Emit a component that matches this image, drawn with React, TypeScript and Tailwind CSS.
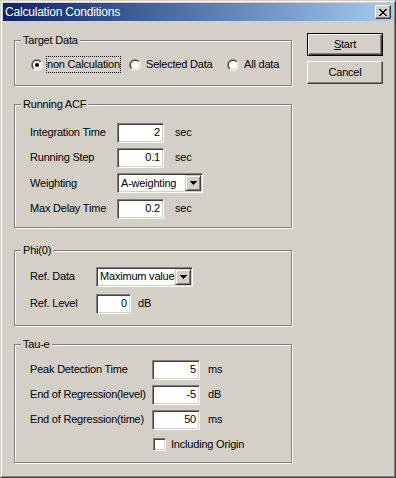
import React from "react";

const sunken =
  "border border-t-[#808080] border-l-[#808080] border-b-white border-r-white shadow-[inset_1px_1px_0_#404040,inset_-1px_-1px_0_#d4d0c8]";

function Group({ label, className, children }: { label: string; className: string; children: React.ReactNode }) {
  return (
    <div className={`flex flex-col w-[278px] border border-[#808080] shadow-[inset_1px_1px_0_#fff,1px_1px_0_#fff] ${className}`}>
      <span className="self-start -mt-[7px] ml-[6px] px-[2px] h-[13px] leading-[13px] bg-[#d4d0c8]">{label}</span>
      {children}
    </div>
  );
}

function Edit({ className, value }: { className: string; value: string }) {
  return (
    <div className={`h-[20px] bg-white ${sunken} flex items-center justify-end pr-[3px] ${className}`}>{value}</div>
  );
}

function Arrow() {
  return (
    <svg width="7" height="4" viewBox="0 0 7 4" shapeRendering="crispEdges">
      <path d="M0 0h7v1h-1v1h-1v1h-1v1h-1v-1h-1v-1h-1v-1h-1z" fill="#000" />
    </svg>
  );
}

function Combo({ className, value }: { className: string; value: string }) {
  return (
    <div className={`h-[20px] bg-white ${sunken} flex items-stretch p-px ${className}`}>
      <span className="flex-1 flex items-center pl-[2px] overflow-hidden">{value}</span>
      <div className="w-[16px] shrink-0 bg-[#d4d0c8] border border-t-[#d4d0c8] border-l-[#d4d0c8] border-r-[#404040] border-b-[#404040] shadow-[inset_1px_1px_0_#fff,inset_-1px_-1px_0_#808080] flex items-center justify-center">
        <Arrow />
      </div>
    </div>
  );
}

function Radio({ checked }: { checked?: boolean }) {
  return (
    <svg width="12" height="12" viewBox="0 0 12 12" className="shrink-0">
      <defs>
        <linearGradient id="ro" x1="0" y1="0" x2="1" y2="1">
          <stop offset="0.5" stopColor="#808080" />
          <stop offset="0.5" stopColor="#ffffff" />
        </linearGradient>
        <linearGradient id="ri" x1="0" y1="0" x2="1" y2="1">
          <stop offset="0.5" stopColor="#404040" />
          <stop offset="0.5" stopColor="#d4d0c8" />
        </linearGradient>
      </defs>
      <circle cx="6" cy="6" r="6" fill="url(#ro)" />
      <circle cx="6" cy="6" r="5" fill="url(#ri)" />
      <circle cx="6" cy="6" r="4" fill="#fff" />
      {checked && <circle cx="6" cy="6" r="2" fill="#000" />}
    </svg>
  );
}

function CloseGlyph() {
  const rows = [
    [0, 1, 6, 7],
    [1, 2, 5, 6],
    [2, 3, 4, 5],
    [3, 4],
    [2, 3, 4, 5],
    [1, 2, 5, 6],
    [0, 1, 6, 7],
  ];
  return (
    <svg width="8" height="7" viewBox="0 0 8 7" shapeRendering="crispEdges">
      {rows.map((r, y) => r.map((x) => <rect key={`${x}-${y}`} x={x} y={y} width="1" height="1" fill="#000" />))}
    </svg>
  );
}

export default function App() {
  return (
    <div className="w-[396px] h-[478px] bg-[#d4d0c8] border border-t-[#d4d0c8] border-l-[#d4d0c8] border-r-[#404040] border-b-[#404040] font-['Liberation_Sans',Arial,sans-serif] text-[11px] tracking-[-0.2px] text-black whitespace-nowrap">
      <div className="h-full border border-t-white border-l-white border-r-[#808080] border-b-[#808080] p-px flex flex-col">
        {/* Title bar */}
        <div className="h-[18px] shrink-0 flex items-center justify-between bg-[linear-gradient(to_right,#0a246a,#a6caf0)]">
          <span className="text-white text-[12px] pl-[2px] leading-[18px]">Calculation Conditions</span>
          <div className="w-[16px] h-[14px] mr-[2px] bg-[#d4d0c8] border border-t-white border-l-white border-r-[#404040] border-b-[#404040] shadow-[inset_-1px_-1px_0_#808080] flex items-center justify-center">
            <CloseGlyph />
          </div>
        </div>

        {/* Client */}
        <div className="flex flex-1">
          <div className="w-[289px] pl-[11px] pt-[19px] flex flex-col">
            <Group label="Target Data" className="h-[46px]">
              <div className="mt-[9px] h-[17px] pl-[16px] flex items-center">
                <div className="w-[98px] flex items-center">
                  <Radio checked />
                  <span className="ml-[3px] border border-dotted border-black leading-[15px]">non Calculation</span>
                </div>
                <div className="w-[98px] flex items-center">
                  <Radio />
                  <span className="ml-[4px] border border-transparent leading-[15px]">Selected Data</span>
                </div>
                <div className="flex items-center">
                  <Radio />
                  <span className="ml-[4px] border border-transparent leading-[15px]">All data</span>
                </div>
              </div>
            </Group>

            <Group label="Running ACF" className="mt-[18px] h-[124px]">
              <div className="mt-[9px] pl-[15px] flex flex-col">
                <div className="h-[25px] flex items-center">
                  <span className="w-[87px]">Integration Time</span>
                  <Edit className="w-[47px]" value="2" />
                  <span className="ml-[11px]">sec</span>
                </div>
                <div className="h-[25px] flex items-center">
                  <span className="w-[87px]">Running Step</span>
                  <Edit className="w-[47px]" value="0.1" />
                  <span className="ml-[11px]">sec</span>
                </div>
                <div className="h-[26px] flex items-center">
                  <span className="w-[87px]">Weighting</span>
                  <Combo className="w-[86px]" value="A-weighting" />
                </div>
                <div className="h-[25px] flex items-center">
                  <span className="w-[87px]">Max Delay Time</span>
                  <Edit className="w-[47px]" value="0.2" />
                  <span className="ml-[11px]">sec</span>
                </div>
              </div>
            </Group>

            <Group label="Phi(0)" className="mt-[22px] h-[76px]">
              <div className="mt-[7px] pl-[15px] flex flex-col gap-[2px]">
                <div className="h-[25px] flex items-center">
                  <span className="w-[66px]">Ref. Data</span>
                  <Combo className="w-[97px]" value="Maximum value" />
                </div>
                <div className="h-[25px] flex items-center">
                  <span className="w-[66px]">Ref. Level</span>
                  <Edit className="w-[35px]" value="0" />
                  <span className="ml-[7px]">dB</span>
                </div>
              </div>
            </Group>

            <Group label="Tau-e" className="mt-[18px] h-[119px]">
              <div className="mt-[6px] pl-[15px] flex flex-col">
                <div className="h-[25px] flex items-center">
                  <span className="w-[122px]">Peak Detection Time</span>
                  <Edit className="w-[48px]" value="5" />
                  <span className="ml-[8px]">ms</span>
                </div>
                <div className="h-[25px] flex items-center">
                  <span className="w-[122px]">End of Regression(level)</span>
                  <Edit className="w-[48px]" value="-5" />
                  <span className="ml-[8px]">dB</span>
                </div>
                <div className="h-[25px] flex items-center">
                  <span className="w-[122px]">End of Regression(time)</span>
                  <Edit className="w-[48px]" value="50" />
                  <span className="ml-[8px]">ms</span>
                </div>
                <div className="h-[25px] flex items-center">
                  <span className="w-[123px]" />
                  <div className={`w-[13px] h-[13px] bg-white ${sunken}`} />
                  <span className="ml-[5px]">Including Origin</span>
                </div>
              </div>
            </Group>
          </div>

          <div className="pl-[15px] pt-[12px] flex flex-col gap-[5px]">
            <div className="w-[76px] h-[23px] flex items-center justify-center border border-black shadow-[inset_1px_1px_0_#fff,inset_-1px_-1px_0_#404040,inset_-2px_-2px_0_#808080]">
              <span>
                <span className="underline">S</span>tart
              </span>
            </div>
            <div className="w-[76px] h-[23px] flex items-center justify-center border border-t-white border-l-white border-r-[#404040] border-b-[#404040] shadow-[inset_-1px_-1px_0_#808080]">
              Cancel
            </div>
          </div>
        </div>
      </div>
    </div>
  );
}
